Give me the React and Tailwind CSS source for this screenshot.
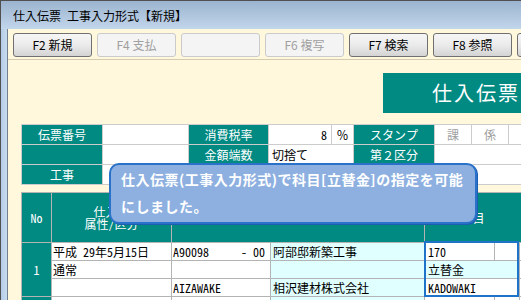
const TEAL = "bg-[#008a82]";

function Btn({ label, disabled }) {
  return disabled ? (
    <div className="w-[79px] h-[24px] shrink-0 rounded-[3px] border border-[#cacaca] bg-[#f4f4f4] text-[#a0a0a0] flex items-center justify-center">
      {label}
    </div>
  ) : (
    <div className="w-[79px] h-[24px] shrink-0 rounded-[3px] border border-[#707070] bg-gradient-to-b from-[#f6f6f6] via-[#ebebeb] to-[#d4d4d4] text-black flex items-center justify-center">
      {label}
    </div>
  );
}

export default function App() {
  return (
    <div className="relative w-[521px] h-[300px] overflow-hidden bg-[#fff8dc] text-[12px] leading-none text-black font-['Noto_Sans_Mono_CJK_JP','Noto_Sans_CJK_JP',sans-serif]">
      {/* title bar */}
      <div className="h-[29px] border-t border-l border-[#505050] bg-gradient-to-b from-[#9cb4cf] to-[#c2d6eb] flex items-center pl-[12px] pt-[1px]">
        <span>仕入伝票 工事入力形式【新規】</span>
      </div>

      <div className="flex h-[271px]">
        {/* left frame */}
        <div className="w-[8px] shrink-0 border-l border-[#505050] border-r border-r-[#6f7f90] bg-gradient-to-r from-[#b4cce6] to-[#c8dbef]" />

        <div className="flex-1 flex flex-col min-w-0">
          {/* toolbar */}
          <div className="h-[31px] shrink-0 border-b border-[#d4ccb0] flex gap-[5px] pl-[5px] pt-[4px] overflow-hidden font-['Noto_Sans_CJK_JP',sans-serif]">
            <Btn label="F2 新規" />
            <Btn label="F4 支払" disabled />
            <Btn label="" disabled />
            <Btn label="F6 複写" disabled />
            <Btn label="F7 検索" />
            <Btn label="F8 参照" />
            <Btn label="" />
          </div>

          {/* big title */}
          <div className={`mt-[13px] ml-[375px] h-[40px] shrink-0 ${TEAL} flex items-center pl-[49px] text-white text-[20px] tracking-[2px] font-['Noto_Sans_CJK_JP',sans-serif] whitespace-nowrap`}>
            仕入伝票
          </div>

          {/* header form */}
          <div className="mt-[11px] ml-[13px] self-start w-max shrink-0 grid grid-cols-[80px_85px_79px_62px_21px_80px_36px_36px_60px] auto-rows-[19px] gap-px p-px bg-[#cccccc]">
            <div className={`${TEAL} text-white flex items-center justify-center`}>伝票番号</div>
            <div className="bg-white" />
            <div className={`${TEAL} text-white flex items-center justify-center`}>消費税率</div>
            <div className="bg-white flex items-center justify-end pr-[4px]">8</div>
            <div className="bg-white flex items-center justify-center">％</div>
            <div className={`${TEAL} text-white flex items-center justify-center`}>スタンプ</div>
            <div className="bg-white text-[#a0a0a0] flex items-center justify-center">課</div>
            <div className="bg-white text-[#a0a0a0] flex items-center justify-center">係</div>
            <div className="bg-white" />

            <div className={TEAL} />
            <div className="bg-white" />
            <div className={`${TEAL} text-white flex items-center justify-center`}>金額端数</div>
            <div className="col-span-2 bg-white flex items-center pl-[3px]">切捨て</div>
            <div className={`${TEAL} text-white flex items-center justify-center`}>第２区分</div>
            <div className="col-span-3 bg-white" />

            <div className={`${TEAL} text-white flex items-center justify-center`}>工事</div>
            <div className="col-span-8 bg-white" />
          </div>

          {/* detail table */}
          <div className="relative mt-[7px] ml-[13px] self-start w-max shrink-0">
            <div className="grid grid-cols-[29px_119px_98px_153px_69px_24px_40px] grid-rows-[49px_17px_17px_17px_17px] gap-px p-px bg-[#b4b4b4]">
              <div className={`${TEAL} text-white flex items-center justify-center`}>No</div>
              <div className={`${TEAL} text-white flex flex-col items-center justify-center leading-[12px]`}>
                <span>仕入日</span>
                <span>属性/区分</span>
              </div>
              <div className={`col-span-2 ${TEAL} text-white flex items-center justify-center`}>工事名</div>
              <div className={`col-span-3 ${TEAL} text-white flex items-center justify-center pr-[40px]`}>科目</div>

              <div className={`row-span-3 ${TEAL} text-white flex items-center justify-center`}>1</div>
              <div className="bg-white flex items-center pl-[1px]">平成 29年5月15日</div>
              <div className="bg-white flex items-center justify-between pl-[1px] pr-[5px]">
                <span>A90098</span>
                <span>-&nbsp;00</span>
              </div>
              <div className="bg-[#e0ffff] flex items-center pl-[2px]">阿部邸新築工事</div>
              <div className="bg-white flex items-center pl-[3px]">170</div>
              <div className="bg-white" />
              <div className="bg-white" />

              <div className="bg-white flex items-center pl-[1px]">通常</div>
              <div className="bg-white" />
              <div className="bg-[#e0ffff]" />
              <div className="col-span-2 bg-[#e0ffff] flex items-center pl-[3px]">立替金</div>
              <div className="bg-white" />

              <div className="bg-white" />
              <div className="bg-white flex items-center pl-[1px]">AIZAWAKE</div>
              <div className="bg-[#e0ffff] flex items-center pl-[2px]">相沢建材株式会社</div>
              <div className="col-span-2 bg-white flex items-center pl-[3px]">KADOWAKI</div>
              <div className="bg-white" />

              <div className={TEAL} />
              <div className="bg-white" />
              <div className="bg-white" />
              <div className="bg-[#e0ffff]" />
              <div className="bg-white" />
              <div className="bg-white" />
              <div className="bg-white" />
            </div>
            {/* focus ring */}
            <div className="absolute left-[403px] top-[49px] w-[95px] h-[56px] border-2 border-[#1f74c9]" />
          </div>
        </div>
      </div>

      {/* tooltip balloon */}
      <div className="absolute left-[109px] top-[163px] w-[368px] h-[61px] rounded-[10px] border-2 border-[#2a72c9] bg-[#8db0e0] shadow-[1px_1px_0_#1c5fb0] pl-[10px] pt-[1px] text-white font-bold text-[14px] leading-[27px] tracking-[0.5px] whitespace-nowrap font-['Noto_Sans_CJK_JP',sans-serif]">
        仕入伝票(工事入力形式)で科目[立替金]の指定を可能
        <br />
        にしました。
      </div>
    </div>
  );
}
